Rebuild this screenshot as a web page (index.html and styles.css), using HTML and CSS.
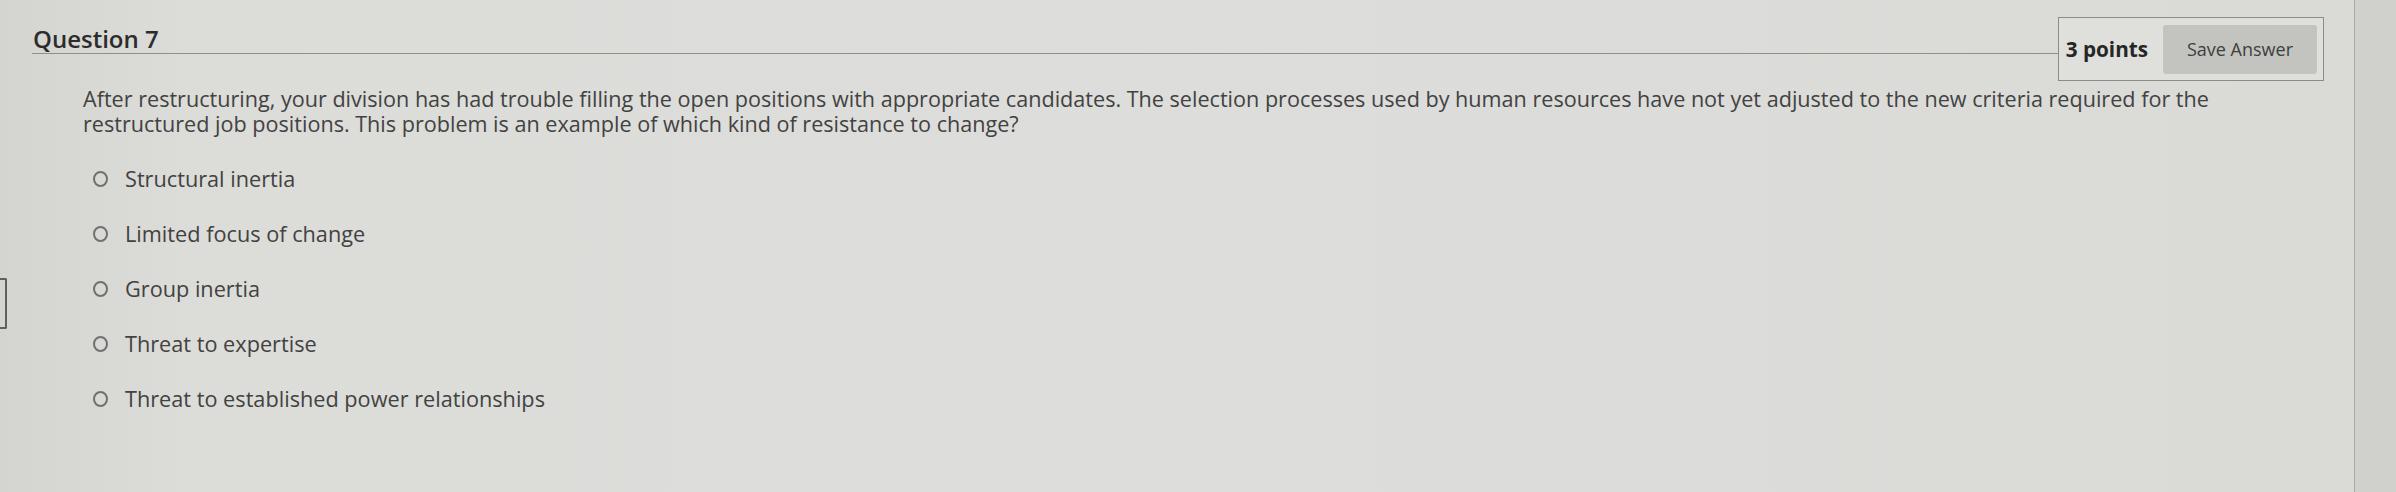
FILE: index.html
```html
<!DOCTYPE html>
<html lang="en">
<head>
<meta charset="utf-8">
<title>Question 7</title>
<link rel="stylesheet" href="styles.css">
</head>
<body>
<div class="page">
  <main class="main">
    <div class="left-tab"></div>
    <header class="q-header">
      <h2 class="q-title">Question 7</h2>
      <div class="points-box">
        <span class="points">3 points</span>
        <button class="save-btn" type="button">Save Answer</button>
      </div>
    </header>
    <p class="q-text">After restructuring, your division has had trouble filling the open positions with appropriate candidates. The selection processes used by human resources have not yet adjusted to the new criteria required for the restructured job positions. This problem is an example of which kind of resistance to change?</p>
    <ul class="options">
      <li class="option"><span class="radio"></span><span>Structural inertia</span></li>
      <li class="option"><span class="radio"></span><span>Limited focus of change</span></li>
      <li class="option"><span class="radio"></span><span>Group inertia</span></li>
      <li class="option"><span class="radio"></span><span>Threat to expertise</span></li>
      <li class="option"><span class="radio"></span><span>Threat to established power relationships</span></li>
    </ul>
  </main>
  <aside class="side-strip"></aside>
</div>
</body>
</html>
```

FILE: styles.css
```css
html, body {
  margin: 0;
  padding: 0;
}

body {
  width: 2396px;
  height: 492px;
  overflow: hidden;
  font-family: "Open Sans", "DejaVu Sans", sans-serif;
  background: #d8d8d5;
}

.page {
  display: flex;
  height: 492px;
}

.main {
  position: relative;
  flex: 1;
  padding: 17px 30px 0 32px;
  background: linear-gradient(90deg, #d4d4d1 0%, #dcdcd9 8%, #dddddb 50%, #dadad7 100%);
}

.left-tab {
  position: absolute;
  left: 0;
  top: 278px;
  width: 5px;
  height: 47px;
  border: 2px solid #5f5f5d;
  border-left: none;
  border-radius: 0 2px 2px 0;
}

.side-strip {
  width: 41px;
  border-left: 1px solid #a9a9a6;
  background: #d0d0cd;
}

.q-header {
  display: flex;
  align-items: flex-start;
}

.q-title {
  flex: 1;
  margin: 0;
  padding: 7px 0 0 1px;
  font-size: 24px;
  line-height: 29px;
  font-weight: 600;
  color: #2c2c2c;
  border-bottom: 1px solid #8f8f8c;
}

.points-box {
  display: flex;
  align-items: center;
  gap: 15px;
  height: 62px;
  padding: 0 6px 0 7px;
  border: 1px solid #8c8c8a;
  background: #dfdfdc;
}

.points {
  font-size: 20.7px;
  font-weight: 700;
  color: #262626;
}

.save-btn {
  width: 154px;
  height: 49px;
  border: none;
  border-radius: 3px;
  background: #c3c4c0;
  font-family: "Open Sans", "DejaVu Sans", sans-serif;
  font-size: 18px;
  color: #3e3e3e;
  padding: 0;
}

.q-text {
  width: 2180px;
  margin: 5px 0 0 51px;
  font-size: 21.6px;
  line-height: 25px;
  color: #424242;
}

.options {
  list-style: none;
  margin: 30px 0 0 61px;
  padding: 0;
  display: flex;
  flex-direction: column;
  gap: 30px;
}

.option {
  display: flex;
  align-items: center;
  gap: 17px;
  font-size: 21.7px;
  line-height: 25px;
  color: #424242;
}

.radio {
  box-sizing: border-box;
  width: 15px;
  height: 16px;
  border: 2px solid #707070;
  border-radius: 50%;
}
```
